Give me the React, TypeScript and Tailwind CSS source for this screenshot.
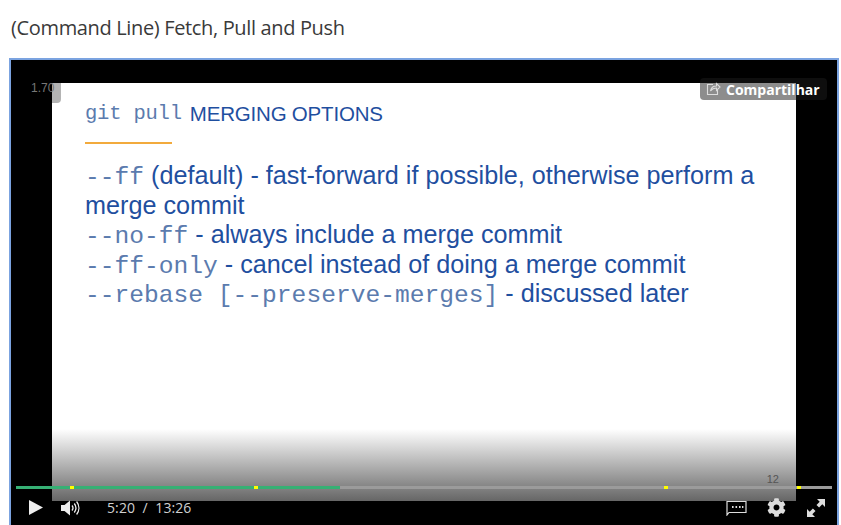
import { FaCog } from 'react-icons/fa';

const mono = "font-['Liberation_Mono',monospace] text-[#5b7bae]";
const monoLine = "font-['Liberation_Mono',monospace] text-[24.6px] leading-none text-[#5b7bae]";

// chapter markers on the seek bar, px from the bar's left edge
const markers = [54, 238, 648, 781];

function Lines() {
  return (
    <div className="mt-[17px] w-[680px] text-[25.2px] leading-[29.5px] text-[#1f4f9f]">
      <div><span className={monoLine}>--ff</span> (default) - fast-forward if possible, otherwise perform a merge commit</div>
      <div><span className={monoLine}>--no-ff</span> - always include a merge commit</div>
      <div><span className={monoLine}>--ff-only</span> - cancel instead of doing a merge commit</div>
      <div><span className={monoLine}>--rebase [--preserve-merges]</span> - discussed later</div>
    </div>
  );
}

function Slide() {
  return (
    <div className="relative h-[418px] bg-white pl-[33px] pt-[19px] font-['Liberation_Sans',sans-serif]">
      <div className="flex h-[24px] items-center gap-[8px] text-[20.5px] tracking-[-0.2px] text-[#1f4f9f]">
        <span className={mono}>git pull</span>
        <span>MERGING OPTIONS</span>
      </div>
      <div className="mt-[16px] h-[2px] w-[87px] bg-[#f2aa3c]" />
      <Lines />
      <div className="absolute inset-x-0 bottom-0 h-[72px] bg-gradient-to-b from-transparent to-[#666666]" />
      <div className="absolute right-[17px] bottom-[14px] text-[11px] text-[#555]">12</div>
      <div className="absolute left-0 top-0 h-[20px] w-[9px] rounded-br-[4px] bg-[#b4b4b4]" />
    </div>
  );
}

function Controls() {
  return (
    <div className="relative -mt-[11px] flex h-[35px] items-center font-['Open_Sans',sans-serif] text-white">
      <svg width="14" height="15" viewBox="0 0 14 15" fill="#eee" className="ml-[18px]">
        <path d="M0 0l14 7.500L0 15z" />
      </svg>
      <svg width="20" height="18" viewBox="0 0 20 18" fill="none" stroke="#eee" className="ml-[18px]">
        <path d="M0 6h3.500L9 1.500v15L3.500 12H0z" fill="#eee" stroke="none" />
        <path d="M11 6.500c1.200 1.500 1.200 3.500 0 5" strokeWidth="1.300" />
        <path d="M13.300 4.500c2 2.700 2 6.300 0 9" strokeWidth="1.300" />
        <path d="M15.600 2.500c3 3.900 3 9.100 0 13" strokeWidth="1.300" />
      </svg>
      <div className="ml-[26px] text-[14px] tracking-[0.1px] text-[#d0d0d0]">5:20&nbsp; /&nbsp; 13:26</div>
      <div className="ml-auto flex items-center gap-[20px] pr-[11px]">
        <svg width="21" height="16" viewBox="0 0 21 16" fill="none" stroke="#ddd" strokeWidth="1.2">
          <path d="M1 1.500h19v11H3l-2 2.500z" />
          <path d="M6 7h1.600M9.500 7h1.600M13 7h1.600M16 7h1.400" strokeWidth="1.800" />
        </svg>
        <FaCog size={19} className="text-[#ddd]" />
        <svg width="20" height="20" viewBox="0 0 20 20" fill="#ddd">
          <path d="M11 1h8v8l-2.700-2.700-3.200 3.200-2.600-2.600 3.200-3.200zM9 19H1v-8l2.700 2.700 3.200-3.200 2.600 2.600-3.200 3.200z" />
        </svg>
      </div>
    </div>
  );
}

export default function App() {
  return (
    <div className="h-[525px] w-[841px] overflow-hidden bg-white">
      <h1 className="pl-[11px] pt-[14px] font-['Open_Sans',sans-serif] text-[20px] leading-[27px] tracking-[-0.35px] text-[#3a3a3a]">
        (Command Line) Fetch, Pull and Push
      </h1>
      <div className="relative ml-[9px] mt-[17px] flex h-[467px] w-[830px] flex-col border-2 border-b-0 border-[#7ba3e0] bg-black">
        <div className="pl-[41px] pr-[41px] pt-[23px]">
          <Slide />
        </div>
        <Controls />

        {/* overlays on the video */}
        <div className="absolute left-[20px] top-[19px] font-['Liberation_Sans',sans-serif] text-[12px] text-[#777]">1.70</div>
        <div className="absolute right-[10px] top-[18px] flex h-[22px] w-[127px] items-center rounded-[4px] bg-[#1b1b1b]/50 pl-[6px] font-['Open_Sans',sans-serif] text-[14px] font-bold text-white">
          <svg width="15" height="14" viewBox="0 0 15 14" fill="none" stroke="#ddd" strokeWidth="1.1" className="mr-[5px]">
            <path d="M7 2.500H1.500v10h10V8" />
            <path d="M4.500 9c.5-3 2.800-5 6-5V1.500L14 5l-3.500 3.500V6c-2.500 0-4.500 1-6 3z" />
          </svg>
          Compartilhar
        </div>
        <div className="absolute left-[5px] top-[426px] h-[3px] w-[816px] bg-[#9b9b9b]">
          <div className="h-full w-[324px] bg-[#36b074]" />
          {markers.map(x => (
            <div key={x} className="absolute top-0 h-[3px] w-[4px] bg-[#ffff00]" style={{ left: x }} />
          ))}
        </div>
      </div>
    </div>
  );
}
